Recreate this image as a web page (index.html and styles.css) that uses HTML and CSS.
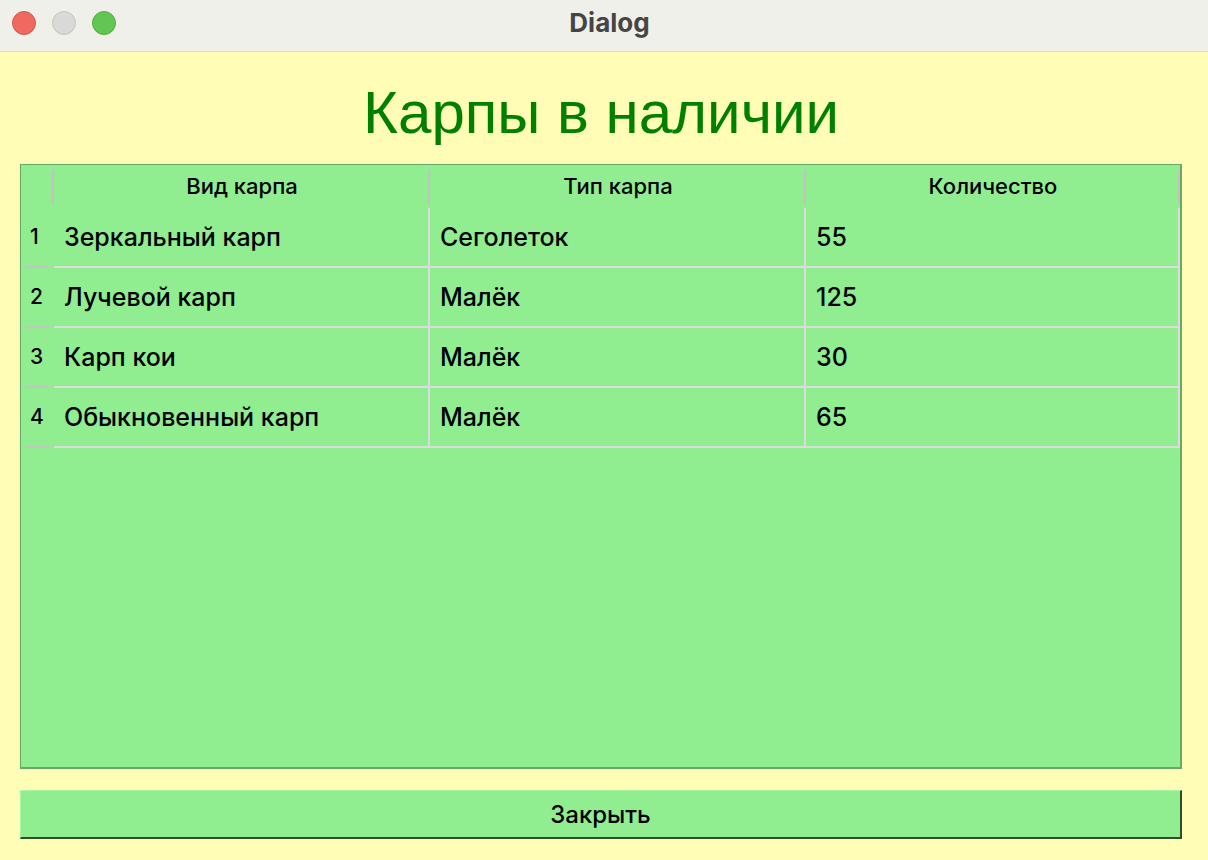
FILE: index.html
```html
<!DOCTYPE html>
<html lang="ru">
<head>
<meta charset="utf-8">
<title>Dialog</title>
<link rel="stylesheet" href="styles.css">
</head>
<body>
<div class="window">
  <div class="titlebar">
    <div class="lights">
      <span class="light red"></span>
      <span class="light gray"></span>
      <span class="light green"></span>
    </div>
    <div class="wtitle">Dialog</div>
  </div>
  <div class="content">
    <h1 class="heading">Карпы в наличии</h1>
    <div class="table">
      <div class="hrow">
        <div class="corner"></div>
        <div class="hcell">Вид карпа</div>
        <div class="hcell">Тип карпа</div>
        <div class="hcell">Количество</div>
      </div>
      <div class="row">
        <div class="rnum">1</div>
        <div class="cell">Зеркальный карп</div>
        <div class="cell">Сеголеток</div>
        <div class="cell">55</div>
      </div>
      <div class="row">
        <div class="rnum">2</div>
        <div class="cell">Лучевой карп</div>
        <div class="cell">Малёк</div>
        <div class="cell">125</div>
      </div>
      <div class="row">
        <div class="rnum">3</div>
        <div class="cell">Карп кои</div>
        <div class="cell">Малёк</div>
        <div class="cell">30</div>
      </div>
      <div class="row">
        <div class="rnum">4</div>
        <div class="cell">Обыкновенный карп</div>
        <div class="cell">Малёк</div>
        <div class="cell">65</div>
      </div>
      <div class="filler"></div>
    </div>
    <button class="close">Закрыть</button>
  </div>
</div>
</body>
</html>
```
FILE: styles.css
```css
html, body {
  margin: 0;
  padding: 0;
}
body {
  width: 1208px;
  height: 860px;
  overflow: hidden;
  background: #fffdb6;
  font-family: Inter, "Liberation Sans", Arial, sans-serif;
}
.window {
  display: flex;
  flex-direction: column;
  height: 860px;
}
.titlebar {
  height: 51px;
  background: #f0f0eb;
  border-bottom: 1px solid #e6de96;
  position: relative;
  display: flex;
  align-items: center;
  justify-content: center;
}
.lights {
  position: absolute;
  left: 12px;
  top: 11px;
  display: flex;
  gap: 16px;
}
.light {
  width: 24px;
  height: 24px;
  border-radius: 50%;
  box-sizing: border-box;
  border: 1px solid rgba(0,0,0,0.12);
}
.light.red { background: #ee6a5f; border-color: #d5584e; }
.light.gray { background: #d9d9d7; border-color: #c4c4c2; }
.light.green { background: #62c554; border-color: #4fae43; }
.wtitle {
  font-family: Inter, "Liberation Sans", Arial, sans-serif;
  font-weight: bold;
  font-size: 26px;
  color: #454545;
  margin-left: 11px;
  margin-top: -6px;
}
.content {
  flex: 1;
  padding: 0 26px 0 20px;
  display: flex;
  flex-direction: column;
}
.heading {
  margin: 0;
  height: 112px;
  box-sizing: border-box;
  padding-top: 29px;
  text-align: center;
  font-family: "Liberation Sans", Arial, sans-serif;
  font-weight: normal;
  font-size: 60px;
  line-height: 64px;
  color: #008000;
}
.table {
  width: 1162px;
  height: 605px;
  box-sizing: border-box;
  background: #90ee90;
  border-style: solid;
  border-color: #66aa66;
  border-width: 1px 2px 2px 1px;
  display: flex;
  flex-direction: column;
}
.hrow, .row {
  display: grid;
  grid-template-columns: 33px 376px 376px 374px;
}
.hrow {
  height: 43px;
}
.corner {
  position: relative;
}
.hcell {
  position: relative;
  text-align: center;
  font-size: 22px;
  font-weight: 500;
  line-height: 42px;
  color: #000;
}
.corner::after, .hcell::after {
  content: "";
  position: absolute;
  right: 0;
  top: 5px;
  bottom: 4px;
  width: 2px;
  background: #c2c2c2;
}
.row {
  height: 60px;
}
.rnum {
  font-size: 21px;
  font-weight: 500;
  line-height: 58px;
  padding-left: 9px;
  position: relative;
  color: #000;
}
.rnum::after {
  content: "";
  position: absolute;
  left: 4px;
  width: 24px;
  bottom: 0;
  height: 2px;
  background: #c4c4c4;
}
.cell {
  font-size: 25px;
  font-weight: 500;
  line-height: 58px;
  padding-left: 10px;
  border-right: 2px solid #dcdcdc;
  border-bottom: 2px solid #dcdcdc;
  color: #000;
}
.filler {
  flex: 1;
}
.close {
  margin-top: 21px;
  width: 1162px;
  height: 49px;
  background: #90ee90;
  border-style: solid;
  border-width: 1px 2px 2px 1px;
  border-color: #a8f5a8 #2e4f2e #2e4f2e #a8f5a8;
  font-family: Inter, "Liberation Sans", Arial, sans-serif;
  font-size: 24px;
  font-weight: 500;
  color: #000;
  padding: 0;
}
```
